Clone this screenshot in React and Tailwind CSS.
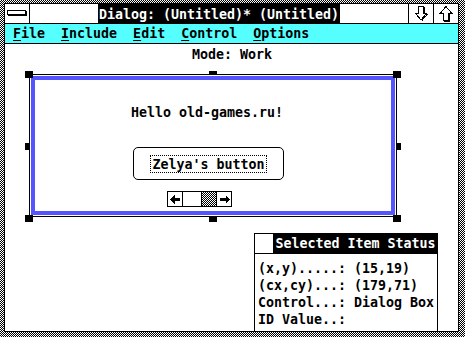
import React from "react";

const mono = { fontFamily: '"DejaVu Sans Mono", "Liberation Mono", monospace' };

function Handle({ cls }) {
  return <div className={`absolute w-[8px] h-[7px] bg-black ${cls}`} />;
}

function DownArrow() {
  return (
    <svg width="15" height="16" viewBox="0 0 15 16" shapeRendering="crispEdges">
      <path d="M4.5 0.5 H9.5 V7.5 H12.5 L7 14 L1.5 7.5 H4.5 Z" fill="white" stroke="black" strokeWidth="1" />
      <path d="M10.5 1 V8 M13.5 8 L8 14.5" stroke="black" strokeWidth="1" fill="none" />
    </svg>
  );
}

function UpArrow() {
  return (
    <svg width="15" height="16" viewBox="0 0 15 16" shapeRendering="crispEdges">
      <path d="M7 0.5 L12.5 7 H9.5 V14.5 H4.5 V7 H1.5 Z" fill="white" stroke="black" strokeWidth="1" />
      <path d="M10.5 8 V15.5 H5 M13 7.5 L11 7.5" stroke="black" strokeWidth="1" fill="none" />
    </svg>
  );
}

function MenuItem({ first, rest }) {
  return (
    <span>
      <span className="underline underline-offset-2">{first}</span>
      {rest}
    </span>
  );
}

export default function App() {
  return (
    <div
      className="w-[465px] h-[337px] overflow-hidden bg-[repeating-conic-gradient(#000_0_25%,#fff_0_50%)] bg-[length:2px_2px] pt-[3px] pl-[4px] pr-[6px] pb-[5px] font-bold text-[13.3px] leading-[16px] text-black"
      style={mono}
    >
      <div className="w-full h-full border border-black bg-white flex flex-col">
        {/* Title bar */}
        <div className="h-[20px] flex border-b border-black shrink-0">
          <div className="w-[25px] border-r border-black flex items-center justify-center">
            <svg width="21" height="7" viewBox="0 0 21 7" shapeRendering="crispEdges">
              <rect x="0.5" y="0.5" width="18" height="4" fill="white" stroke="black" />
              <path d="M1 5.5 H20 M19.5 1 V6" stroke="black" />
            </svg>
          </div>
          <div className="flex-1 flex items-center justify-center">
            <div className="bg-black text-white px-[1px] h-[20px] pt-[3px]">Dialog: (Untitled)* (Untitled)</div>
          </div>
          <div className="w-[25px] border-l border-black flex items-center justify-center">
            <DownArrow />
          </div>
          <div className="w-[25px] border-l border-black flex items-center justify-center">
            <UpArrow />
          </div>
        </div>
        {/* Menu bar */}
        <div className="h-[20px] bg-[#55ffff] border-b border-black flex items-center pl-[8px] gap-[16px] shrink-0">
          <MenuItem first="F" rest="ile" />
          <MenuItem first="I" rest="nclude" />
          <MenuItem first="E" rest="dit" />
          <MenuItem first="C" rest="ontrol" />
          <MenuItem first="O" rest="ptions" />
        </div>
        {/* Workspace */}
        <div className="relative flex-1">
          <div className="h-[20px] pt-[3px] flex justify-center pl-[1px]">Mode: Work</div>

          {/* mid handles (under dialog) */}
          <Handle cls="left-[204px] top-[27px]" />
          <Handle cls="left-[204px] top-[171px]" />
          <Handle cls="left-[20px] top-[99px]" />
          <Handle cls="left-[388px] top-[99px]" />

          <div className="relative ml-[24px] mt-[10px] w-[368px] h-[143px] border border-black bg-white p-[1px]">
            <div className="w-full h-full border-[4px] border-[#5555ff] bg-white flex flex-col">
              <div className="ml-[96px] mt-[25px]">Hello old-games.ru!</div>
              <div className="ml-[98px] mt-[26px] w-[151px] h-[33px] border border-black rounded-[5px] flex items-center justify-center">
                <div className="border border-dotted border-black px-[1px] h-[18px] pt-[1px]">Zelya's button</div>
              </div>
              <div className="ml-[132px] mt-[11px] w-[65px] h-[16px] border border-black flex">
                <div className="w-[15px] border-r border-black flex items-center justify-center">
                  <svg width="11" height="9" viewBox="0 0 11 9" shapeRendering="crispEdges">
                    <path d="M0 4.5 L4.5 0 V3 H10 V6 H4.5 V9 Z" fill="black" />
                  </svg>
                </div>
                <div className="w-[18px]" />
                <div className="w-[15px] border-l border-black bg-[repeating-conic-gradient(#000_0_25%,#fff_0_50%)] bg-[length:2px_2px]" />
                <div className="flex-1 border-l border-black flex items-center justify-center">
                  <svg width="11" height="9" viewBox="0 0 11 9" shapeRendering="crispEdges">
                    <path d="M11 4.5 L6.5 0 V3 H1 V6 H6.5 V9 Z" fill="black" />
                  </svg>
                </div>
              </div>
            </div>
          </div>

          {/* corner handles (over dialog) */}
          <Handle cls="left-[20px] top-[27px]" />
          <Handle cls="left-[388px] top-[27px]" />
          <Handle cls="left-[20px] top-[171px]" />
          <Handle cls="left-[388px] top-[171px]" />

          {/* Status window */}
          <div className="absolute left-[249px] top-[189px] w-[184px] bottom-0 border-l border-t border-r border-black bg-white flex flex-col">
            <div className="h-[20px] flex border-b border-black shrink-0">
              <div className="w-[19px] border-r border-black" />
              <div className="flex-1 bg-black text-white flex justify-center pt-[2px]">Selected Item Status</div>
            </div>
            <div className="pl-[3px] pt-[7px] flex flex-col gap-[1px]">
              <div>(x,y).....: (15,19)</div>
              <div>(cx,cy)...: (179,71)</div>
              <div>Control...: Dialog Box</div>
              <div>ID Value..:</div>
            </div>
          </div>
        </div>
      </div>
    </div>
  );
}
